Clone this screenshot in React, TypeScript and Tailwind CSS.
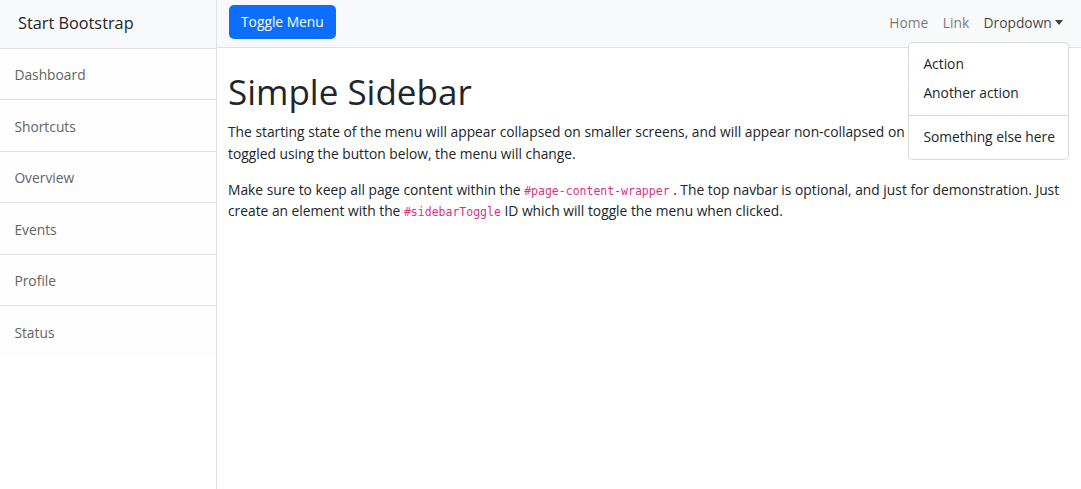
import * as React from 'react';

const sidebarLinks = ['Dashboard', 'Shortcuts', 'Overview', 'Events', 'Profile', 'Status'];

const Sidebar: React.FC = () => (
  <div className="w-[217px] shrink-0 border-r border-[#dee2e6] bg-white">
    <div className="h-[49px] flex items-center px-[18px] bg-[#f8f9fa] border-b border-[#dee2e6] text-[16.3px] text-[#212529]">
      Start Bootstrap
    </div>
    <div className="flex flex-col">
      {sidebarLinks.map((label, i) => (
        <a
          key={label}
          href="#"
          className={`px-[14.4px] pt-[2px] h-[51.4px] flex items-center bg-[#fefefe] text-[#636464] ${i < sidebarLinks.length - 1 ? 'border-b border-[#dee2e6]' : ''}`}
        >
          {label}
        </a>
      ))}
    </div>
  </div>
);

const DropdownMenu: React.FC = () => (
  <div className="absolute right-[12px] top-[42px] w-[161px] bg-white border border-[rgba(0,0,0,0.15)] rounded-[5px] py-[7.2px] text-[#212529] z-10">
    <a href="#" className="block px-[14.4px] h-[28.8px] leading-[28.8px]">Action</a>
    <a href="#" className="block px-[14.4px] h-[28.8px] leading-[28.8px]">Another action</a>
    <div className="my-[7.2px] border-t border-[rgba(0,0,0,0.15)]" />
    <a href="#" className="block px-[14.4px] h-[28.8px] leading-[28.8px] whitespace-nowrap">Something else here</a>
  </div>
);

const TopNav: React.FC = () => (
  <nav className="relative h-[48px] flex items-start justify-between pl-[12px] pr-[11px] bg-[#f8f9fa] border-b border-[#dee2e6]">
    <button className="mt-[5px] h-[34px] px-[12px] rounded-[5px] bg-[#0d6efd] text-white">Toggle Menu</button>
    <div className="flex items-center h-[45px]">
      <a href="#" className="px-[7.2px] text-[rgba(0,0,0,0.55)]">Home</a>
      <a href="#" className="px-[7.2px] text-[rgba(0,0,0,0.55)]">Link</a>
      <a href="#" className="px-[7.2px] flex items-center text-[rgba(0,0,0,0.75)]">
        Dropdown
        <span className="ml-[3px] w-0 h-0 border-l-[4px] border-r-[4px] border-t-[5px] border-l-transparent border-r-transparent border-t-[rgba(0,0,0,0.75)]" />
      </a>
    </div>
    <DropdownMenu />
  </nav>
);

const Code: React.FC<React.PropsWithChildren> = ({ children }) => (
  <code className="text-[#d63384] text-[11.5px] leading-none font-['DejaVu_Sans_Mono',monospace]">{children}</code>
);

export default function App() {
  return (
    <div className="flex min-h-[489px] bg-white text-[13.8px] leading-[21.6px] text-[#212529] font-['Open_Sans',sans-serif]">
      <Sidebar />
      <div className="flex-1 min-w-0">
        <TopNav />
        <div className="px-[11px]">
          <h1 className="mt-[23px] mb-[8px] text-[35px] leading-[1.2] font-medium">Simple Sidebar</h1>
          <p className="mb-[14.4px]">
            The starting state of the menu will appear collapsed on smaller screens, and will appear non-collapsed on larger screens. When
            toggled using the button below, the menu will change.
          </p>
          <p>
            Make sure to keep all page content within the <Code>#page-content-wrapper</Code> . The top navbar is optional, and just for demonstration. Just
            create an element with the <Code>#sidebarToggle</Code> ID which will toggle the menu when clicked.
          </p>
        </div>
      </div>
    </div>
  );
}
